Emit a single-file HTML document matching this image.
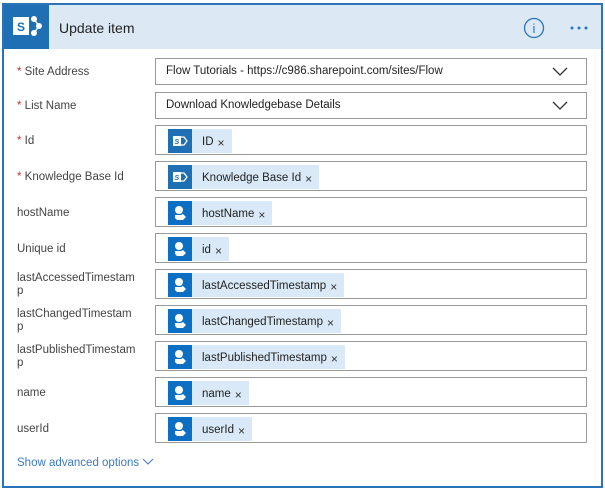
<!DOCTYPE html>
<html><head><style>
*{box-sizing:border-box;margin:0;padding:0}
body{width:605px;height:489px;background:#fff;font-family:"Liberation Sans",sans-serif;position:relative;overflow:hidden}
.card{position:absolute;left:2px;top:3px;width:601px;height:485px;border:2px solid #2a73b8;background:#fff}
.hdr{position:absolute;left:0;top:0;right:0;height:44px;background:#dce9f4}
.hic{position:absolute;left:0;top:0;width:45px;height:44px;background:#1f6fb5}
.title{position:absolute;left:55px;top:15px;font-size:14px;color:#222}
.lbl{position:absolute;left:15px;font-size:11.5px;color:#444;line-height:13px}
.lbl b{color:#d0312d;font-weight:normal}
.box{position:absolute;left:153px;width:432px;border:1px solid #999;height:30px}
.sel{height:27px;font-size:11.5px;color:#222;padding:6px 10px}
.chev{position:absolute;right:18px;top:8px}
.tok{position:absolute;left:12px;top:3px;height:24px;background:#d9e9f7;padding-left:34px;padding-right:7px;font-size:11.5px;color:#222;line-height:24px;white-space:nowrap}
.tok i{position:absolute;left:0;top:0;width:24px;height:24px;background:#0d6fc4}
.tok i svg{position:absolute;left:0;top:0}
.tok s{text-decoration:none;font-size:12px;margin-left:4px;position:relative;top:2px;color:#333}
.adv{position:absolute;left:17px;top:457px;font-size:11.5px;color:#3b79c4}
</style></head><body>
<div class="card">
 <div class="hdr">
  <div class="hic"><svg width="45" height="44"><rect x="9" y="12" width="16" height="18" fill="#fff"/><text x="13" y="26" font-size="12" font-weight="bold" fill="#1f6fb5" font-family="Liberation Sans">S</text><circle cx="30" cy="14" r="3" fill="#fff"/><circle cx="35" cy="21" r="3" fill="#fff"/><circle cx="30" cy="28" r="3" fill="#fff"/><path d="M27 14 L30 14 L35 21 L30 28 L27 28" stroke="#fff" fill="none" stroke-width="1.5"/></svg></div>
  <div class="title">Update item</div>
  <svg style="position:absolute;left:519px;top:12px" width="22" height="22"><circle cx="11" cy="11" r="9.5" fill="none" stroke="#2a73b8" stroke-width="1.3"/><text x="11" y="16" font-size="13" text-anchor="middle" fill="#2a73b8" font-family="Liberation Sans">i</text></svg>
  <svg style="position:absolute;left:565px;top:20px" width="22" height="6"><circle cx="3" cy="3" r="1.5" fill="#2a73b8"/><circle cx="10" cy="3" r="1.5" fill="#2a73b8"/><circle cx="17" cy="3" r="1.5" fill="#2a73b8"/></svg>
 </div>
</div>
<div class="lbl" style="top:66px;left:17px"><b>*</b> Site Address</div>
<div class="box sel" style="top:58px;left:155px;width:432px">Flow Tutorials - https://c986.sharepoint.com/sites/Flow<svg class="chev" width="16" height="10"><path d="M1 1 L8 8 L15 1" stroke="#333" fill="none" stroke-width="1.3"/></svg></div>
<div class="lbl" style="top:100px;left:17px"><b>*</b> List Name</div>
<div class="box sel" style="top:92px;left:155px;width:432px">Download Knowledgebase Details<svg class="chev" width="16" height="10"><path d="M1 1 L8 8 L15 1" stroke="#333" fill="none" stroke-width="1.3"/></svg></div>

<div class="lbl" style="top:135px;left:17px"><b>*</b> Id</div>
<div class="box" style="top:125px;left:155px;width:432px"><div class="tok"><i style="background:#1f6fb5"><svg width="24" height="24"><rect x="5" y="7" width="8" height="10" fill="#fff"/><text x="6.5" y="15" font-size="7" font-weight="bold" fill="#1f6fb5" font-family="Liberation Sans">S</text><path d="M13 8 L16 8 L19 12 L16 16 L13 16" stroke="#fff" fill="none" stroke-width="1.3"/></svg></i>ID<s>×</s></div></div>
<div class="lbl" style="top:171px;left:17px"><b>*</b> Knowledge Base Id</div>
<div class="box" style="top:161px;left:155px;width:432px"><div class="tok"><i style="background:#1f6fb5"><svg width="24" height="24"><rect x="5" y="7" width="8" height="10" fill="#fff"/><text x="6.5" y="15" font-size="7" font-weight="bold" fill="#1f6fb5" font-family="Liberation Sans">S</text><path d="M13 8 L16 8 L19 12 L16 16 L13 16" stroke="#fff" fill="none" stroke-width="1.3"/></svg></i>Knowledge Base Id<s>×</s></div></div>
<div class="lbl" style="top:207px;left:17px">hostName</div>
<div class="box" style="top:197px;left:155px;width:432px"><div class="tok"><i><svg width="24" height="24"><circle cx="11" cy="9" r="4" fill="#fff"/><path d="M7 14 L13 14 L15 13 L18 16 L15 19 L9 19 L7 17Z" fill="#fff"/></svg></i>hostName<s>×</s></div></div>
<div class="lbl" style="top:243px;left:17px">Unique id</div>
<div class="box" style="top:233px;left:155px;width:432px"><div class="tok"><i><svg width="24" height="24"><circle cx="11" cy="9" r="4" fill="#fff"/><path d="M7 14 L13 14 L15 13 L18 16 L15 19 L9 19 L7 17Z" fill="#fff"/></svg></i>id<s>×</s></div></div>
<div class="lbl" style="top:272px;left:17px">lastAccessedTimestam<br>p</div>
<div class="box" style="top:269px;left:155px;width:432px"><div class="tok"><i><svg width="24" height="24"><circle cx="11" cy="9" r="4" fill="#fff"/><path d="M7 14 L13 14 L15 13 L18 16 L15 19 L9 19 L7 17Z" fill="#fff"/></svg></i>lastAccessedTimestamp<s>×</s></div></div>
<div class="lbl" style="top:308px;left:17px">lastChangedTimestam<br>p</div>
<div class="box" style="top:305px;left:155px;width:432px"><div class="tok"><i><svg width="24" height="24"><circle cx="11" cy="9" r="4" fill="#fff"/><path d="M7 14 L13 14 L15 13 L18 16 L15 19 L9 19 L7 17Z" fill="#fff"/></svg></i>lastChangedTimestamp<s>×</s></div></div>
<div class="lbl" style="top:344px;left:17px">lastPublishedTimestam<br>p</div>
<div class="box" style="top:341px;left:155px;width:432px"><div class="tok"><i><svg width="24" height="24"><circle cx="11" cy="9" r="4" fill="#fff"/><path d="M7 14 L13 14 L15 13 L18 16 L15 19 L9 19 L7 17Z" fill="#fff"/></svg></i>lastPublishedTimestamp<s>×</s></div></div>
<div class="lbl" style="top:387px;left:17px">name</div>
<div class="box" style="top:377px;left:155px;width:432px"><div class="tok"><i><svg width="24" height="24"><circle cx="11" cy="9" r="4" fill="#fff"/><path d="M7 14 L13 14 L15 13 L18 16 L15 19 L9 19 L7 17Z" fill="#fff"/></svg></i>name<s>×</s></div></div>
<div class="lbl" style="top:423px;left:17px">userId</div>
<div class="box" style="top:413px;left:155px;width:432px"><div class="tok"><i><svg width="24" height="24"><circle cx="11" cy="9" r="4" fill="#fff"/><path d="M7 14 L13 14 L15 13 L18 16 L15 19 L9 19 L7 17Z" fill="#fff"/></svg></i>userId<s>×</s></div></div>
<div class="adv">Show advanced options <svg width="12" height="8"><path d="M1 1 L6 6 L11 1" stroke="#3b79c4" fill="none"/></svg></div>
</body></html>
